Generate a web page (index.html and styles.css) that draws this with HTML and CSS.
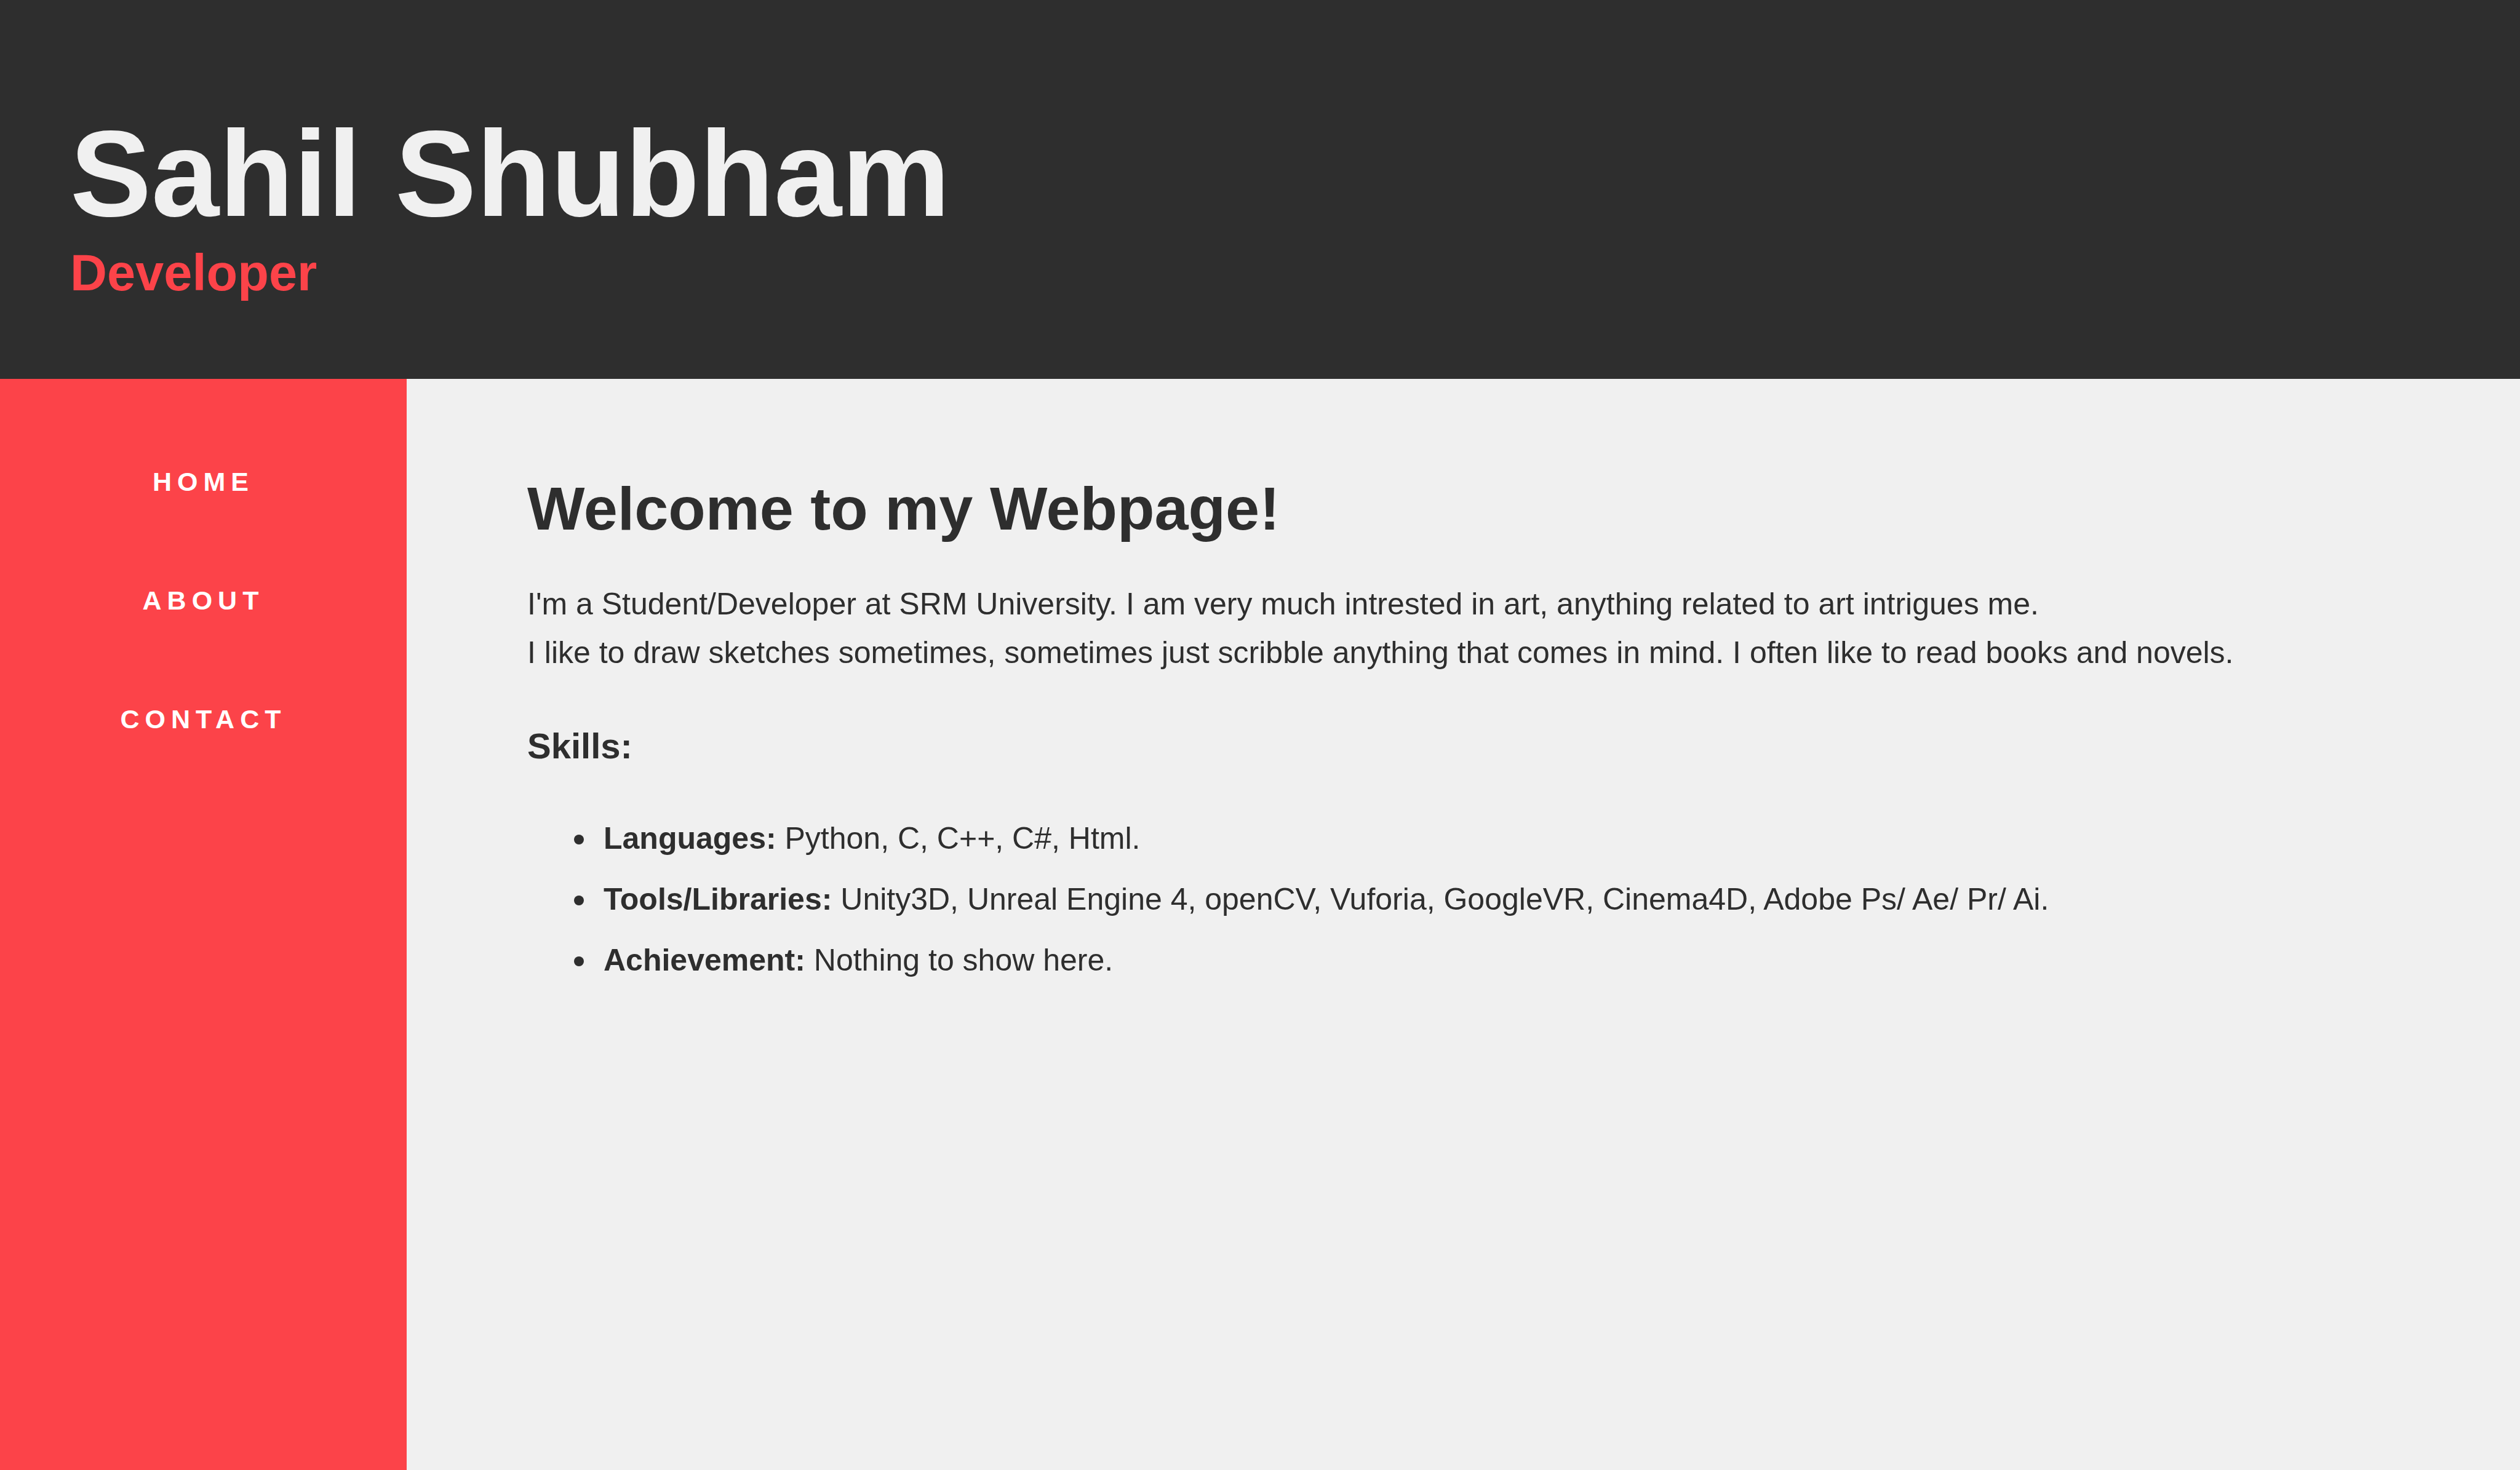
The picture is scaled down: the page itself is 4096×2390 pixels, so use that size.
FILE: index.html
```html
<!DOCTYPE html>
<html lang="en">
<head>
  <meta charset="utf-8">
  <meta name="viewport" content="width=device-width, initial-scale=1">
  <title>Sahil Shubham</title>
  <link rel="stylesheet" href="styles.css">
</head>
<body>
  <header class="site-header">
    <h1 class="site-name">Sahil Shubham</h1>
    <p class="site-role">Developer</p>
  </header>
  <div class="layout">
    <nav class="sidebar" aria-label="Main">
      <a class="nav-link" href="#home">HOME</a>
      <a class="nav-link" href="#about">ABOUT</a>
      <a class="nav-link" href="#contact">CONTACT</a>
    </nav>
    <main class="content">
      <h2 class="content-title">Welcome to my Webpage!</h2>
      <p class="intro">I'm a Student/Developer at SRM University. I am very much intrested in art, anything related to art intrigues me.<br>I like to draw sketches sometimes, sometimes just scribble anything that comes in mind. I often like to read books and novels.</p>
      <h3 class="section-title">Skills:</h3>
      <ul class="skills">
        <li class="skill"><strong>Languages:</strong> Python, C, C++, C#, Html.</li>
        <li class="skill"><strong>Tools/Libraries:</strong> Unity3D, Unreal Engine 4, openCV, Vuforia, GoogleVR, Cinema4D, Adobe Ps/ Ae/ Pr/ Ai.</li>
        <li class="skill"><strong>Achievement:</strong> Nothing to show here.</li>
      </ul>
    </main>
  </div>
</body>
</html>
```
FILE: styles.css
```css
* {
  box-sizing: border-box;
}

body {
  display: flex;
  flex-direction: column;
  min-height: 100vh;
  margin: 0;
  background: #f0f0f0;
  color: #2e2e2e;
  font-family: "Liberation Sans", Arial, Helvetica, sans-serif;
  font-size: 50px;
  line-height: 79px;
}

/* Header */
.site-header {
  padding: 170px 114px 124px;
  background: #2e2e2e;
}

.site-name {
  margin: 0;
  color: #f0f0f0;
  font-size: 198px;
  line-height: 226px;
}

.site-role {
  margin: 0;
  color: #fc4349;
  font-size: 83px;
  font-weight: bold;
  line-height: 96px;
}

/* Sidebar and content */
.layout {
  display: grid;
  flex: 1;
  grid-template-columns: 661px 1fr;
}

.sidebar {
  display: flex;
  flex-direction: column;
  align-items: center;
  gap: 145px;
  padding-top: 143px;
  background: #fc4349;
}

.nav-link {
  color: #ffffff;
  font-size: 43px;
  font-weight: bold;
  letter-spacing: 9px;
  line-height: 48px;
  text-decoration: none;
}

.content {
  padding: 151px 196px;
}

.content-title {
  margin: 0 0 56px;
  font-size: 99px;
  line-height: 120px;
}

.intro {
  margin: 0 0 72px;
}

.section-title {
  margin: 0 0 72px;
  font-size: 58px;
}

.skills {
  display: flex;
  flex-direction: column;
  gap: 20px;
  margin: 0;
  padding-left: 124px;
  list-style: none;
}

.skill::before {
  content: "";
  display: inline-block;
  width: 16px;
  height: 16px;
  margin-right: 32px;
  margin-left: -48px;
  border-radius: 50%;
  background: currentColor;
  vertical-align: 7px;
}
```
